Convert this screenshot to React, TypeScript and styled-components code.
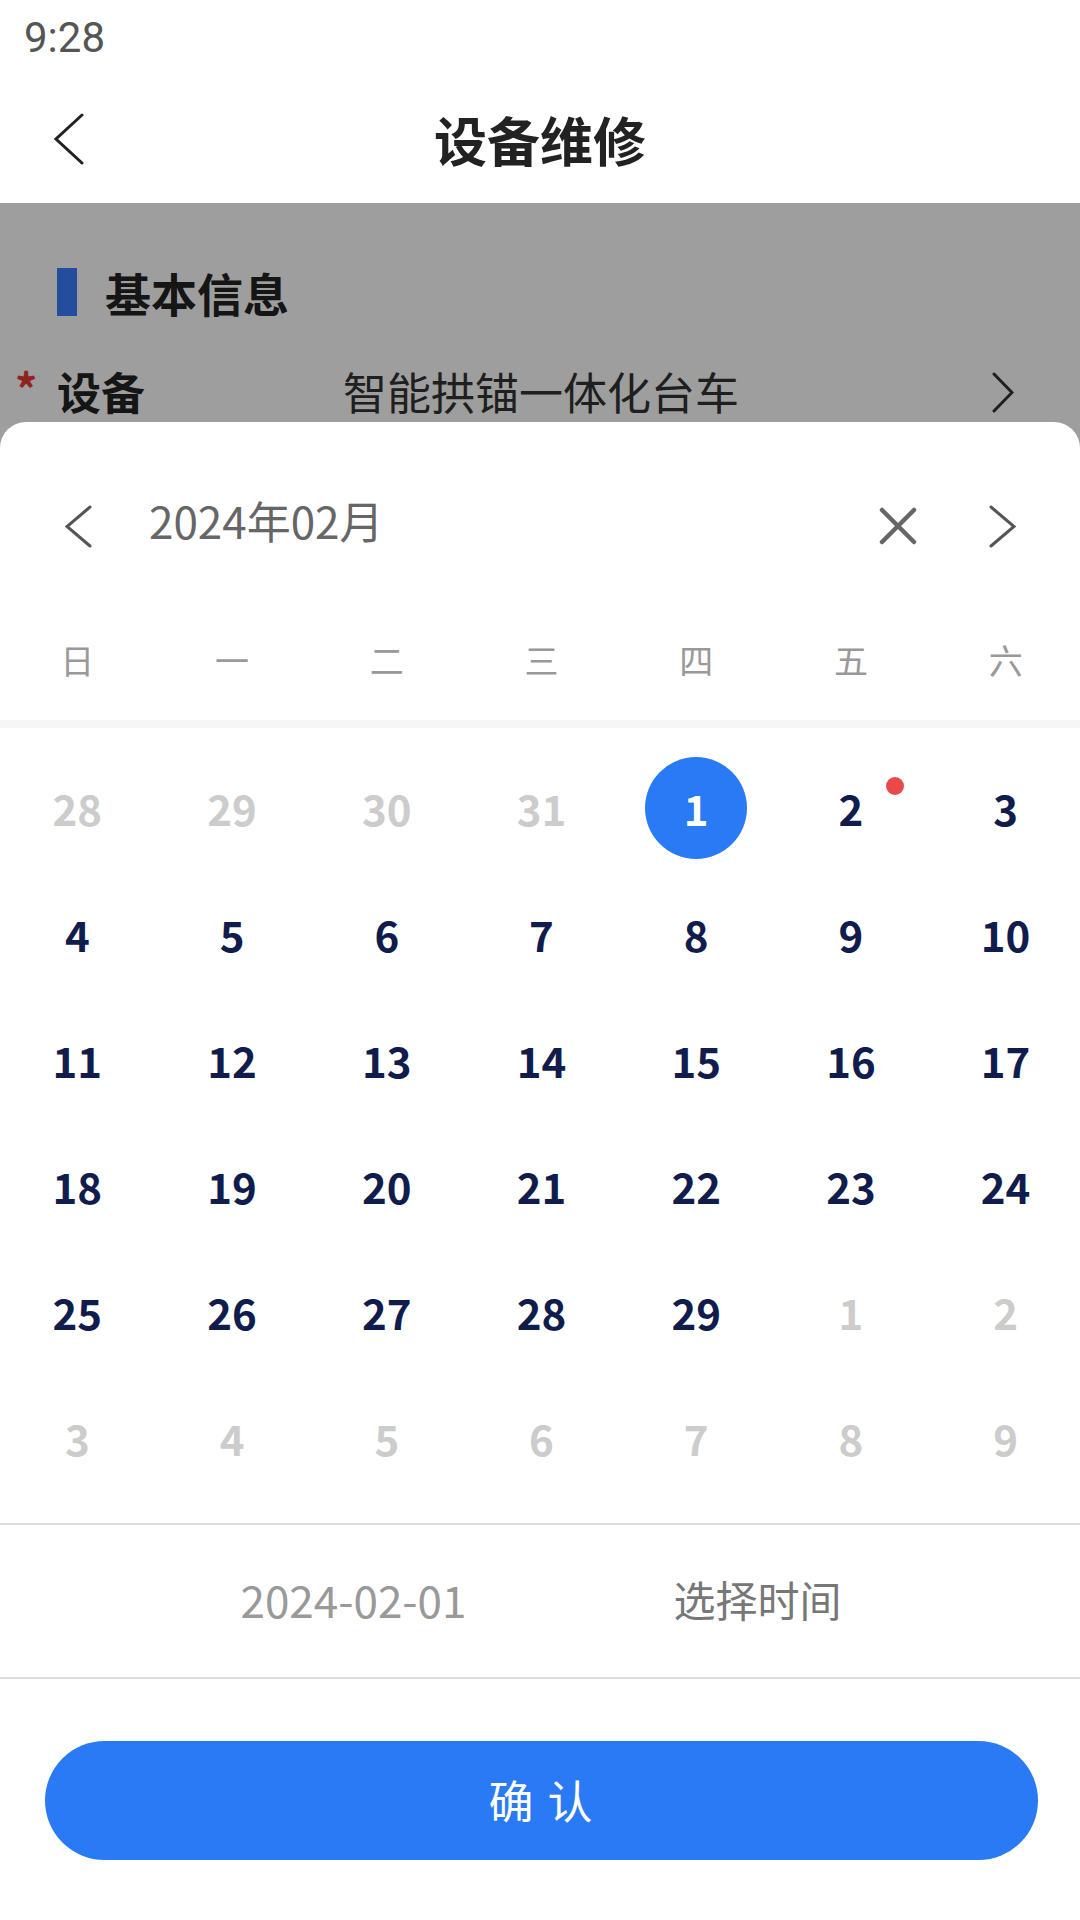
import React from "react";
import styled, { createGlobalStyle } from "styled-components";

const FONT = `"Noto Sans CJK SC", "Noto Sans", sans-serif`;

const Global = createGlobalStyle`
  html, body { margin: 0; padding: 0; background: #fff; }
  body { font-family: ${FONT}; }
  * { box-sizing: border-box; }
`;

const Screen = styled.div`
  position: relative;
  width: 1080px;
  height: 1920px;
  overflow: hidden;
  background: #fff;
  font-family: ${FONT};
`;

const StatusBar = styled.div`
  height: 75px;
  padding: 8px 0 0 24px;
  font-family: Roboto, "Liberation Sans", sans-serif;
  font-size: 42px;
  line-height: 60px;
  color: #555;
`;

const NavBar = styled.div`
  height: 128px;
  display: grid;
  grid-template-columns: 1fr auto 1fr;
  align-items: center;
`;

const BackBtn = styled.div`
  padding-left: 54px;
  display: flex;
  align-items: center;
`;

const NavTitle = styled.div`
  font-size: 53px;
  font-weight: 700;
  color: #222;
  line-height: 1;
`;

const Body = styled.div`
  padding-top: 65px;
`;

const SectionHead = styled.div`
  display: flex;
  align-items: center;
  height: 48px;
  padding-left: 57px;
  gap: 28px;
`;

const SectionBar = styled.div`
  width: 20px;
  height: 48px;
  background: #3a7cff;
`;

const SectionTitle = styled.div`
  font-size: 46px;
  font-weight: 700;
  color: #222;
  line-height: 1;
`;

const FieldRow = styled.div`
  margin-top: 35px;
  height: 80px;
  display: flex;
  align-items: center;
  padding: 0 66px 0 15px;
`;

const Required = styled.span`
  color: #e53935;
  font-size: 44px;
  font-weight: 700;
  width: 42px;
  align-self: flex-start;
  margin-top: 4px;
`;

const FieldLabel = styled.span`
  font-size: 44px;
  font-weight: 700;
  color: #222;
  width: 286px;
`;

const FieldValue = styled.span`
  flex: 1;
  font-size: 44px;
  color: #333;
`;

const RowArrow = styled.div`
  display: flex;
  align-items: center;
  margin-top: 2px;
`;

const Mask = styled.div`
  position: absolute;
  left: 0;
  right: 0;
  top: 203px;
  bottom: 0;
  background: rgba(0, 0, 0, 0.38);
`;

const Sheet = styled.div`
  position: absolute;
  left: 0;
  right: 0;
  top: 422px;
  bottom: 0;
  background: #fff;
  border-radius: 26px 26px 0 0;
  display: flex;
  flex-direction: column;
`;

const SheetHeader = styled.div`
  height: 208px;
  display: flex;
  align-items: center;
  padding: 0 64px 0 65px;
`;

const MonthTitle = styled.div`
  margin-left: 57px;
  flex: 1;
  font-size: 44px;
  color: #666;
  line-height: 1;
  margin-top: -12px;
`;

const IconBtn = styled.div<{ $gap?: number }>`
  display: flex;
  align-items: center;
  margin-left: ${(p) => p.$gap ?? 0}px;
`;

const WeekRow = styled.div`
  height: 90px;
  padding-top: 13px;
  margin-right: -3px;
  display: grid;
  grid-template-columns: repeat(7, 1fr);
`;

const WeekDay = styled.div`
  text-align: center;
  font-size: 34px;
  line-height: 34px;
  color: #999;
`;

const Band = styled.div`
  height: 8px;
  background: #f6f6f6;
`;

const DayGrid = styled.div`
  padding: 17px 0 22px;
  margin-right: -3px;
  display: grid;
  grid-template-columns: repeat(7, 1fr);
  grid-auto-rows: 126px;
`;

const DayCell = styled.div`
  position: relative;
  display: flex;
  align-items: center;
  justify-content: center;
`;

const DayNum = styled.span<{ $muted?: boolean; $selected?: boolean }>`
  width: 102px;
  height: 102px;
  border-radius: 50%;
  display: flex;
  align-items: center;
  justify-content: center;
  font-size: 42px;
  font-weight: 700;
  line-height: 1;
  color: ${(p) => (p.$selected ? "#fff" : p.$muted ? "#cccccc" : "#101c4c")};
  background: ${(p) => (p.$selected ? "#2a7af6" : "transparent")};
`;

const Dot = styled.span`
  position: absolute;
  left: calc(50% + 35px);
  top: 32px;
  width: 18px;
  height: 18px;
  border-radius: 50%;
  background: #e84a4a;
`;

const Divider = styled.div`
  height: 2px;
  background: #dddddd;
`;

const TimeRow = styled.div`
  height: 152px;
  padding-bottom: 5px;
  display: flex;
  align-items: center;
  justify-content: center;
  gap: 207px;
  padding-left: 2px;
`;

const DateText = styled.span`
  font-size: 44px;
  color: #999;
`;

const TimeText = styled.span`
  font-size: 42px;
  color: #777;
`;

const ConfirmButton = styled.button`
  margin: 62px 42px 0 45px;
  height: 119px;
  padding-bottom: 4px;
  border: none;
  border-radius: 60px;
  background: #2a7af6;
  color: #fff;
  font-family: ${FONT};
  font-size: 45px;
  letter-spacing: 2px;
  line-height: 1;
  white-space: pre;
`;

const Chevron = ({
  dir,
  w,
  h,
  color,
  stroke = 3,
}: {
  dir: "left" | "right";
  w: number;
  h: number;
  color: string;
  stroke?: number;
}) => {
  const pts =
    dir === "left"
      ? `${w - 2},2 2,${h / 2} ${w - 2},${h - 2}`
      : `2,2 ${w - 2},${h / 2} 2,${h - 2}`;
  return (
    <svg width={w} height={h} viewBox={`0 0 ${w} ${h}`}>
      <polyline points={pts} fill="none" stroke={color} strokeWidth={stroke} strokeLinecap="round" strokeLinejoin="miter" />
    </svg>
  );
};

const CloseIcon = () => (
  <svg width="38" height="38" viewBox="0 0 38 38">
    <path d="M3 3 L35 35 M35 3 L3 35" stroke="#666" strokeWidth="4.5" strokeLinecap="round" />
  </svg>
);

type Day = { n: number; muted: boolean };

const days: Day[] = [
  ...[28, 29, 30, 31].map((n) => ({ n, muted: true })),
  ...Array.from({ length: 29 }, (_, i) => ({ n: i + 1, muted: false })),
  ...Array.from({ length: 9 }, (_, i) => ({ n: i + 1, muted: true })),
];

const weekdays = ["日", "一", "二", "三", "四", "五", "六"];

export default function App() {
  return (
    <>
      <Global />
      <Screen>
        <StatusBar>9:28</StatusBar>
        <NavBar>
          <BackBtn>
            <Chevron dir="left" w={30} h={52} color="#222" stroke={3} />
          </BackBtn>
          <NavTitle>设备维修</NavTitle>
          <div />
        </NavBar>
        <Body>
          <SectionHead>
            <SectionBar />
            <SectionTitle>基本信息</SectionTitle>
          </SectionHead>
          <FieldRow>
            <Required>*</Required>
            <FieldLabel>设备</FieldLabel>
            <FieldValue>智能拱锚一体化台车</FieldValue>
            <RowArrow>
              <Chevron dir="right" w={22} h={41} color="#333" stroke={3} />
            </RowArrow>
          </FieldRow>
        </Body>
        <Mask />
        <Sheet>
          <SheetHeader>
            <Chevron dir="left" w={27} h={43} color="#555" stroke={3} />
            <MonthTitle>2024年02月</MonthTitle>
            <IconBtn>
              <CloseIcon />
            </IconBtn>
            <IconBtn $gap={72}>
              <Chevron dir="right" w={27} h={43} color="#555" stroke={3} />
            </IconBtn>
          </SheetHeader>
          <WeekRow>
            {weekdays.map((w) => (
              <WeekDay key={w}>{w}</WeekDay>
            ))}
          </WeekRow>
          <Band />
          <DayGrid>
            {days.map((d, i) => (
              <DayCell key={i}>
                <DayNum $muted={d.muted} $selected={!d.muted && d.n === 1}>
                  {d.n}
                </DayNum>
                {!d.muted && d.n === 2 && <Dot />}
              </DayCell>
            ))}
          </DayGrid>
          <Divider />
          <TimeRow>
            <DateText>2024-02-01</DateText>
            <TimeText>选择时间</TimeText>
          </TimeRow>
          <Divider />
          <ConfirmButton>确 认</ConfirmButton>
        </Sheet>
      </Screen>
    </>
  );
}
